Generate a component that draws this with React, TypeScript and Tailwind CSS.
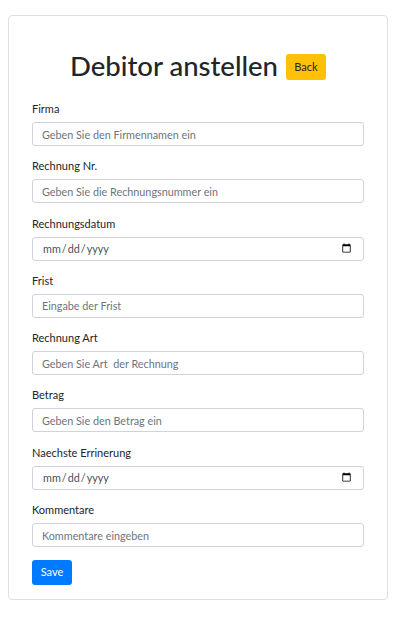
import React from "react";

const fields = [
  { label: "Firma", type: "text", placeholder: "Geben Sie den Firmennamen ein" },
  { label: "Rechnung Nr.", type: "text", placeholder: "Geben Sie die Rechnungsnummer ein" },
  { label: "Rechnungsdatum", type: "date", placeholder: "" },
  { label: "Frist", type: "text", placeholder: "Eingabe der Frist" },
  { label: "Rechnung Art", type: "text", placeholder: "Geben Sie Art  der Rechnung" },
  { label: "Betrag", type: "text", placeholder: "Geben Sie den Betrag ein" },
  { label: "Naechste Errinerung", type: "date", placeholder: "" },
  { label: "Kommentare", type: "text", placeholder: "Kommentare eingeben" },
];

export default function App() {
  return (
    <div className="min-h-[632px] bg-white font-['Lato',sans-serif] text-[#212529]">
      <div className="pt-[15px] pl-[8px] w-[388px]">
        <div className="border border-[#dfdfdf] rounded-[4px] px-[23px] pt-[30px] pb-[14px]">
          {/* Title */}
          <div className="flex items-center justify-center gap-[8px] h-[40px] mb-[14px]">
            <h1 className="text-[27.5px] leading-[40px] font-medium">Debitor anstellen</h1>
            <button className="h-[26px] w-[40px] rounded-[3px] bg-[#ffc107] text-[11px] text-[#212529] mt-[2px]">
              Back
            </button>
          </div>

          <form>
            {fields.map((f) => (
              <div key={f.label} className="mb-[11.3px]">
                <label className="block text-[11px] leading-[18px] mb-[4px]">{f.label}</label>
                <input
                  type={f.type}
                  placeholder={f.placeholder}
                  className="block w-full h-[24px] px-[9px] border border-[#ced4da] rounded-[3px] text-[10.8px] text-[#495057] placeholder:text-[#6c757d] outline-none"
                />
              </div>
            ))}
            <button
              type="button"
              className="h-[25px] w-[40px] rounded-[3px] bg-[#007bff] text-white text-[11px]"
            >
              Save
            </button>
          </form>
        </div>
      </div>
    </div>
  );
}
